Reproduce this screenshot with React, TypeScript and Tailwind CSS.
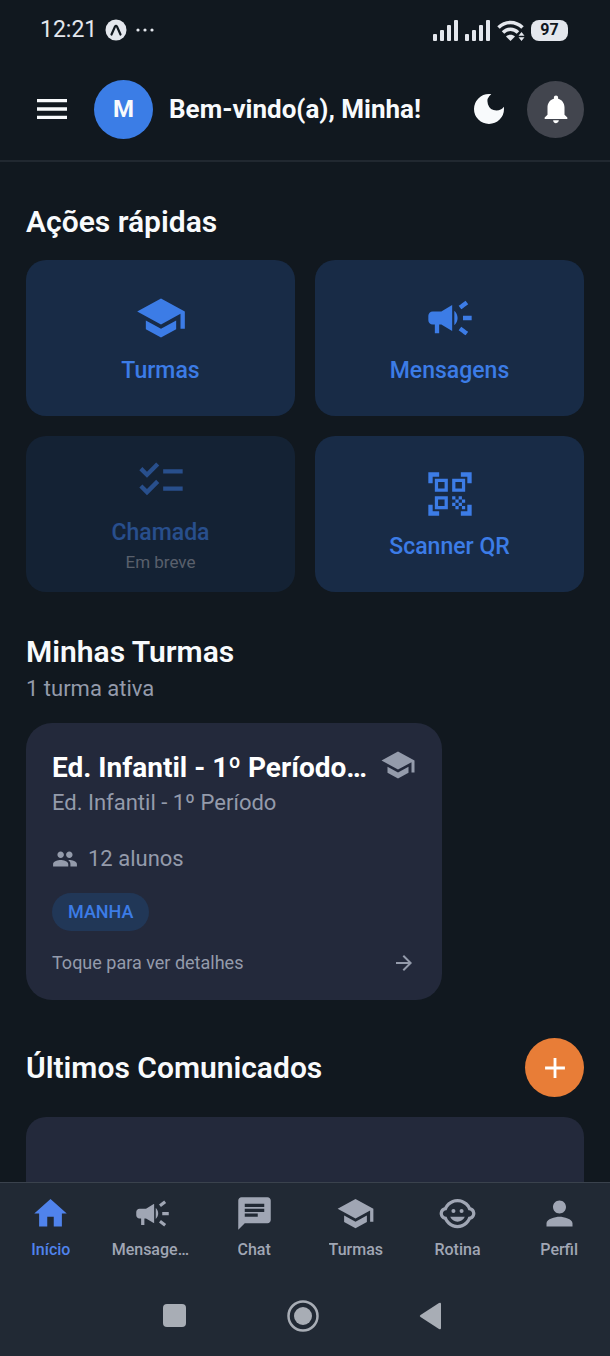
import type { ReactNode } from "react";
import type { IconType } from "react-icons";
import {
  MdAdd,
  MdArrowForward,
  MdCampaign,
  MdChat,
  MdChecklist,
  MdChildCare,
  MdDarkMode,
  MdHome,
  MdMenu,
  MdNotifications,
  MdPeople,
  MdPerson,
  MdQrCodeScanner,
  MdSchool,
} from "react-icons/md";

function SignalIcon() {
  return (
    <svg viewBox="0 0 26 21" className="h-[21px] w-[26px]" fill="currentColor" aria-hidden="true">
      <rect x="0" y="14" width="4" height="7" rx="1" />
      <rect x="7" y="10" width="4" height="11" rx="1" />
      <rect x="14" y="5" width="4" height="16" rx="1" />
      <rect x="21" y="0" width="4" height="21" rx="1" />
    </svg>
  );
}

function WifiIcon() {
  return (
    <svg viewBox="0 0 28 21" className="h-[21px] w-[28px]" fill="none" aria-hidden="true">
      <path d="M1.5 7.5C8.5 0.8 18.5 0.8 25.5 7.5" stroke="currentColor" strokeWidth="3.6" />
      <path d="M6 12.5C10.5 8.2 16.5 8.2 21 12.5" stroke="currentColor" strokeWidth="3.6" />
      <path d="M9 16.5C11.5 14.2 15.5 14.2 18 16.5L13.5 21Z" fill="currentColor" />
      <path d="M24.5 12L27.5 15.8H21.5ZM24.5 21L27.5 17.2H21.5Z" fill="currentColor" />
    </svg>
  );
}

function StatusBar() {
  return (
    <div className="flex h-[60px] shrink-0 items-center justify-between pr-[42px] pl-10 text-[#e4e7ed]">
      <div className="flex items-center gap-2">
        <time className="text-[23px] leading-7">12:21</time>
        <svg viewBox="0 0 22 22" className="size-[22px]" aria-hidden="true">
          <circle cx="11" cy="11" r="10.5" fill="#e4e7ed" />
          <path d="M6.5 15.5L10 7.5Q11 6 12 7.5L15.5 15.5" fill="none" stroke="#11181f" strokeWidth="2.2" strokeLinecap="round" />
        </svg>
        <svg viewBox="0 0 20 4" className="h-1 w-5" fill="currentColor" aria-hidden="true">
          <circle cx="3" cy="2" r="1.6" />
          <circle cx="10" cy="2" r="1.6" />
          <circle cx="17" cy="2" r="1.6" />
        </svg>
      </div>
      <div className="flex items-center gap-[6px]">
        <SignalIcon />
        <SignalIcon />
        <WifiIcon />
        <span className="flex h-[21px] w-[37px] items-center justify-center rounded-lg bg-[#e4e7ed] text-[16px] leading-5 font-bold text-[#11181f]">
          97
        </span>
      </div>
    </div>
  );
}

function Header() {
  return (
    <header className="flex h-[102px] shrink-0 items-center border-b-2 border-[#212830] pr-[26px] pb-[2px] pl-8 text-[#f8fafc]">
      <button type="button" aria-label="Abrir menu">
        <MdMenu className="size-10" />
      </button>
      <span className="ml-[22px] flex size-[59px] shrink-0 items-center justify-center rounded-full bg-[#3b7de6] text-[24px] font-bold">
        M
      </span>
      <h1 className="ml-4 min-w-0 flex-1 truncate text-[26px] leading-8 font-bold">Bem-vindo(a), Minha!</h1>
      <button type="button" aria-label="Alternar tema">
        <MdDarkMode className="size-10" />
      </button>
      <button
        type="button"
        aria-label="Notificações"
        className="ml-[18px] flex size-[57px] items-center justify-center rounded-full bg-[#42454e] text-white"
      >
        <MdNotifications className="size-[34px]" />
      </button>
    </header>
  );
}

type ActionProps = { icon: IconType; label: string; note?: string };

function QuickAction({ icon: Icon, label, note }: ActionProps) {
  return (
    <button
      type="button"
      disabled={note !== undefined}
      className="flex h-[156px] flex-col items-center justify-center rounded-[20px] bg-[#182b46] text-[#3c7ce6] disabled:opacity-55"
    >
      <Icon className="size-[52px]" />
      <span className="mt-[13px] text-[23px] leading-[27px] font-medium">{label}</span>
      {note && <span className="mt-1 text-[17px] leading-6 text-[#949bab]">{note}</span>}
    </button>
  );
}

function SectionTitle({ children }: { children: ReactNode }) {
  return <h2 className="text-[30px] leading-[34px] font-semibold text-[#f8fafc]">{children}</h2>;
}

function ClassCard() {
  return (
    <a
      href="#turma"
      className="mt-5 flex w-[416px] max-w-full flex-col rounded-[26px] bg-[#23293b] px-[26px] pt-7 pb-[25px] text-[#949bab]"
    >
      <div className="flex items-start justify-between gap-3">
        <h3 className="truncate text-[28px] leading-[34px] font-bold text-white">Ed. Infantil - 1º Período A</h3>
        <MdSchool className="-mt-1 size-9 shrink-0" />
      </div>
      <p className="text-[22px] leading-9">Ed. Infantil - 1º Período</p>
      <p className="mt-6 flex items-center gap-[10px] text-[22px] leading-7">
        <MdPeople className="size-[26px]" />
        12 alunos
      </p>
      <span className="mt-5 self-start rounded-full bg-[#213757] px-4 text-[18px] leading-[38px] font-medium text-[#3c7ce6]">
        MANHA
      </span>
      <div className="mt-5 flex items-center justify-between">
        <span className="text-[18px] leading-6">Toque para ver detalhes</span>
        <MdArrowForward className="size-6" />
      </div>
    </a>
  );
}

const tabs: { icon: IconType; label: string; active?: boolean }[] = [
  { icon: MdHome, label: "Início", active: true },
  { icon: MdCampaign, label: "Mensagens" },
  { icon: MdChat, label: "Chat" },
  { icon: MdSchool, label: "Turmas" },
  { icon: MdChildCare, label: "Rotina" },
  { icon: MdPerson, label: "Perfil" },
];

function TabBar() {
  return (
    <nav className="grid h-[92px] shrink-0 grid-cols-6 border-t border-[#3a424d] bg-[#212934] text-[#a0a6b4]">
      {tabs.map(({ icon: Icon, label, active }) => (
        <a
          key={label}
          href="#"
          aria-current={active ? "page" : undefined}
          className="flex min-w-0 flex-col items-center px-[10px] pt-[11px] aria-[current=page]:text-[#5083ec]"
        >
          <Icon className="size-[39px]" />
          <span className="mt-[5px] max-w-full truncate text-[16px] leading-6 font-medium">{label}</span>
        </a>
      ))}
    </nav>
  );
}

function SystemNav() {
  return (
    <div className="flex h-[82px] shrink-0 items-center justify-center gap-[98px] bg-[#212934] pt-[2px] pr-1 text-[#a8adb5]">
      <button type="button" aria-label="Recentes">
        <svg viewBox="0 0 28 32" className="h-8 w-7" fill="currentColor">
          <rect x="2" y="4" width="23" height="23" rx="4" />
        </svg>
      </button>
      <button type="button" aria-label="Tela inicial">
        <svg viewBox="0 0 32 32" className="size-8" fill="currentColor">
          <circle cx="16" cy="16" r="14.5" fill="none" stroke="currentColor" strokeWidth="2.5" />
          <circle cx="16" cy="16" r="9" />
        </svg>
      </button>
      <button type="button" aria-label="Voltar">
        <svg viewBox="0 0 28 32" className="h-8 w-7" fill="currentColor">
          <path d="M3.5 15L22 3Q24 2 24 4V28Q24 30 22 29L3.5 17Q2 16 3.5 15Z" />
        </svg>
      </button>
    </div>
  );
}

export default function App() {
  return (
    <div className="flex h-dvh flex-col overflow-hidden bg-[#11181f] font-['Roboto',sans-serif]">
      <StatusBar />
      <Header />
      <main className="min-h-0 flex-1 overflow-y-auto px-[26px] pt-[43px] [scrollbar-width:none]">
        <section>
          <SectionTitle>Ações rápidas</SectionTitle>
          <div className="mt-[21px] grid grid-cols-2 gap-5">
            <QuickAction icon={MdSchool} label="Turmas" />
            <QuickAction icon={MdCampaign} label="Mensagens" />
            <QuickAction icon={MdChecklist} label="Chamada" note="Em breve" />
            <QuickAction icon={MdQrCodeScanner} label="Scanner QR" />
          </div>
        </section>
        <section className="mt-[43px]">
          <SectionTitle>Minhas Turmas</SectionTitle>
          <p className="mt-[6px] text-[22px] leading-7 text-[#949bab]">1 turma ativa</p>
          <ClassCard />
        </section>
        <section className="mt-[38px]">
          <div className="flex items-center justify-between">
            <SectionTitle>Últimos Comunicados</SectionTitle>
            <button
              type="button"
              aria-label="Novo comunicado"
              className="flex size-[59px] items-center justify-center rounded-full bg-[#e87d37] text-white"
            >
              <MdAdd className="size-[34px]" />
            </button>
          </div>
          <div className="mt-5 h-[180px] rounded-[20px] bg-[#23293b]" />
        </section>
      </main>
      <TabBar />
      <SystemNav />
    </div>
  );
}
